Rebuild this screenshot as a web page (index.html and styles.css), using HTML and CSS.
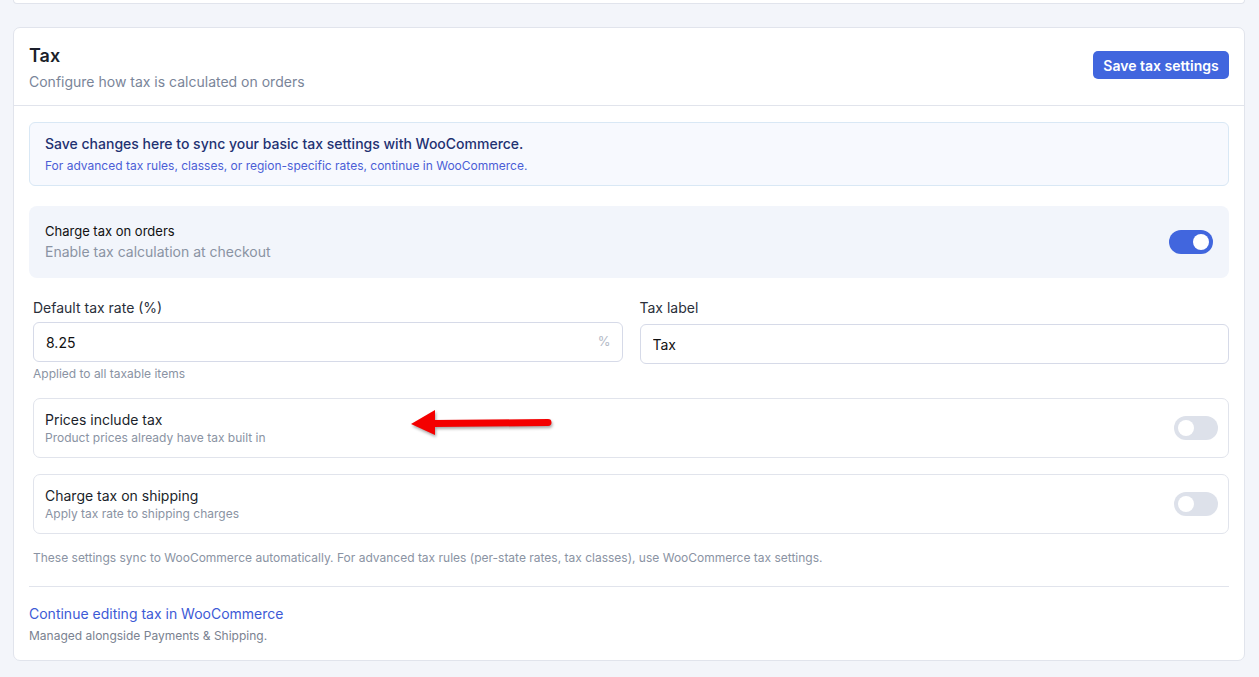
FILE: index.html
```html
<!DOCTYPE html>
<html lang="en">
<head>
    <meta charset="UTF-8">
    <meta name="viewport" content="width=device-width, initial-scale=1.0">
    <title>Tax settings</title>

    <link rel="stylesheet" href="styles.css">
</head>
<body>

    <div class="prev-card"></div>

    <div class="card">
        <div class="card-header">
            <div>
                <h2>Tax</h2>
                <p class="subtitle">Configure how tax is calculated on orders</p>
            </div>
            <button class="btn-primary">Save tax settings</button>
        </div>

        <div class="card-body">
            <div class="notice">
                <p class="notice-title">Save changes here to sync your basic tax settings with WooCommerce.</p>
                <p class="notice-text">For advanced tax rules, classes, or region-specific rates, continue in WooCommerce.</p>
            </div>

            <div class="main-toggle">
                <div>
                    <div class="main-toggle-title">Charge tax on orders</div>
                    <div class="main-toggle-text">Enable tax calculation at checkout</div>
                </div>
                <span class="switch on"></span>
            </div>

            <div class="settings">
                <div class="fields">
                    <div class="field">
                        <label class="field-label">Default tax rate (%)</label>
                        <div class="input-wrap">
                            <input type="text" value="8.25">
                            <span class="suffix">%</span>
                        </div>
                        <div class="help">Applied to all taxable items</div>
                    </div>
                    <div class="field">
                        <label class="field-label tall">Tax label</label>
                        <div class="input-wrap">
                            <input type="text" value="Tax">
                        </div>
                    </div>
                </div>

                <div class="option">
                    <div>
                        <div class="option-title">Prices include tax</div>
                        <div class="option-text">Product prices already have tax built in</div>
                    </div>
                    <span class="switch"></span>

                    <!-- flecha de anotación -->
                    <svg class="arrow" width="155" height="38" viewBox="0 0 155 38">
                        <polygon points="6,20 30,6 30,31" fill="#f40000"/>
                        <line x1="28" y1="19.5" x2="143" y2="18.5" stroke="#f40000" stroke-width="7" stroke-linecap="round"/>
                    </svg>
                </div>

                <div class="option">
                    <div>
                        <div class="option-title">Charge tax on shipping</div>
                        <div class="option-text">Apply tax rate to shipping charges</div>
                    </div>
                    <span class="switch"></span>
                </div>

                <p class="note">These settings sync to WooCommerce automatically. For advanced tax rules (per-state rates, tax classes), use WooCommerce tax settings.</p>
            </div>

            <div class="divider"></div>

            <a class="link" href="#">Continue editing tax in WooCommerce</a>
            <p class="small-muted">Managed alongside Payments &amp; Shipping.</p>
        </div>
    </div>

</body>
</html>
```

FILE: styles.css
```css
body {
    background-color: #f3f5fa;
    color: #1b1f2b;
    font-family: Inter, "Noto Sans", sans-serif;
    margin: 0;
    padding: 0;
}

p {
    margin: 0;
}

.prev-card {
    margin: 0 14px 0 13px;
    height: 3px;
    background: white;
    border: 1px solid #e1e4ec;
    border-top: none;
    border-radius: 0 0 6px 6px;
}

.card {
    margin: 23px 14px 0 13px;
    background: white;
    border: 1px solid #e1e4ec;
    border-radius: 7px;
}

.card-header {
    display: flex;
    justify-content: space-between;
    align-items: flex-start;
    padding: 15px 15px 13px;
    border-bottom: 1px solid #e1e4ec;
}

.card-header h2 {
    margin: 0;
    font-size: 18px;
    line-height: 26px;
    font-weight: 600;
}

.subtitle {
    margin-top: 3px;
    font-size: 14px;
    line-height: 20px;
    color: #7a8599;
}

.btn-primary {
    margin-top: 8px;
    background: #4166de;
    color: white;
    border: none;
    border-radius: 5px;
    height: 28px;
    width: 136px;
    font-family: inherit;
    font-size: 14px;
    font-weight: 600;
    cursor: pointer;
}

.card-body {
    padding: 16px 15px 16px;
}

.notice {
    background: #f7f9fe;
    border: 1px solid #d9e8f5;
    border-radius: 6px;
    padding: 11px 15px 10px;
}

.notice-title {
    font-size: 14px;
    line-height: 20px;
    font-weight: 500;
    color: #1f3272;
}

.notice-text {
    margin-top: 3px;
    font-size: 12px;
    line-height: 18px;
    color: #4b5ed6;
}

.main-toggle {
    margin-top: 20px;
    background: #f2f5fb;
    border-radius: 8px;
    padding: 16px;
    display: flex;
    justify-content: space-between;
    align-items: center;
}

.main-toggle-title {
    font-size: 13px;
    line-height: 18px;
    color: #111;
}

.main-toggle-text {
    margin-top: 2px;
    font-size: 14px;
    line-height: 20px;
    color: #8a93a3;
}

.switch {
    width: 44px;
    height: 24px;
    border-radius: 12px;
    background: #dde1ea;
    position: relative;
    flex-shrink: 0;
}

.switch::after {
    content: "";
    position: absolute;
    top: 4px;
    left: 4px;
    width: 16px;
    height: 16px;
    border-radius: 50%;
    background: white;
}

.switch.on {
    background: #4166de;
}

.switch.on::after {
    left: 24px;
}

.settings {
    padding: 0 0 0 4px;
}

.fields {
    margin-top: 20px;
    display: grid;
    grid-template-columns: 1fr 1fr;
    column-gap: 17px;
}

.field-label {
    display: block;
    font-size: 14px;
    line-height: 20px;
    color: #2a2f3a;
    margin-bottom: 4px;
}

.field-label.tall {
    margin-bottom: 6px;
}

.input-wrap {
    position: relative;
}

.input-wrap input {
    width: 100%;
    box-sizing: border-box;
    height: 40px;
    border: 1px solid #d6dae8;
    border-radius: 6px;
    padding: 0 12px;
    font-family: inherit;
    font-size: 14px;
    color: #111;
    outline: none;
}

.suffix {
    position: absolute;
    right: 12px;
    top: 11px;
    font-size: 13px;
    color: #b3b9c6;
}

.help {
    margin-top: 4px;
    font-size: 12px;
    line-height: 16px;
    color: #8a93a3;
}

.option {
    position: relative;
    margin-top: 16px;
    border: 1px solid #e1e4ec;
    border-radius: 7px;
    padding: 11px 10px 11px 11px;
    display: flex;
    justify-content: space-between;
    align-items: center;
}

.option-title {
    font-size: 14px;
    line-height: 20px;
    color: #1b1f2b;
}

.option-text {
    font-size: 12px;
    line-height: 16px;
    color: #8a93a3;
}

.arrow {
    position: absolute;
    left: 371px;
    top: 5px;
    filter: drop-shadow(1px 2px 1.5px rgba(0, 0, 0, 0.35));
}

.note {
    margin-top: 16px;
    font-size: 12px;
    line-height: 16px;
    color: #8a93a3;
}

.divider {
    margin-top: 20px;
    border-top: 1px solid #e1e4ec;
}

.link {
    display: block;
    margin-top: 17px;
    font-size: 14px;
    line-height: 20px;
    color: #3d5ad6;
    text-decoration: none;
}

.small-muted {
    margin-top: 4px;
    font-size: 12px;
    line-height: 16px;
    color: #7a8290;
}
```
